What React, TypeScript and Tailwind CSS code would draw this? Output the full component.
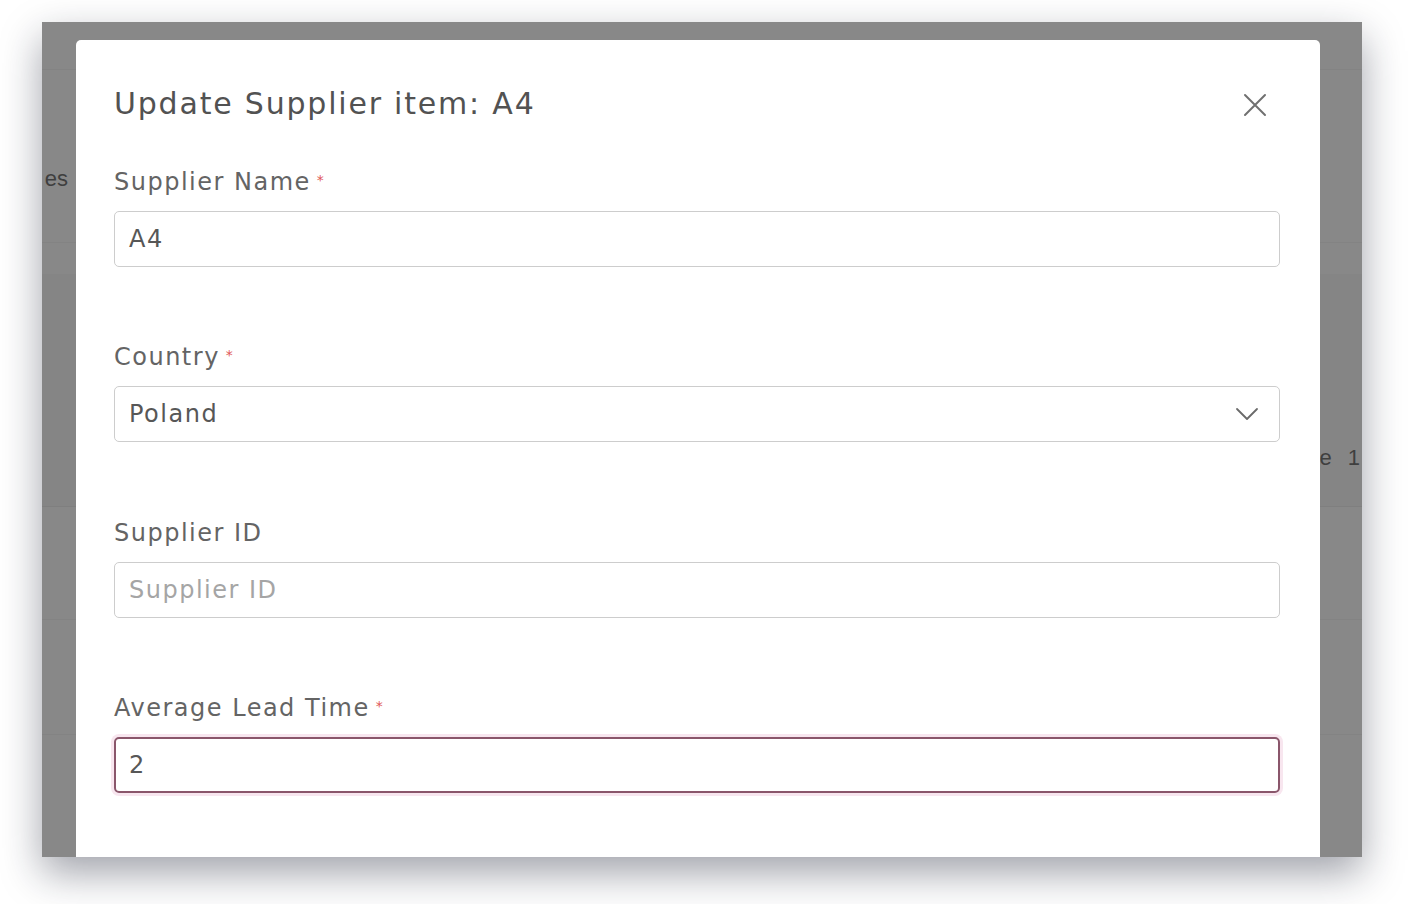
import React from "react";

const font = { fontFamily: '"DejaVu Sans", "Noto Sans", sans-serif' };

function Asterisk() {
  return <span className="ml-[6px] text-[14px] leading-none text-[#e05656] self-start mt-[6px]">*</span>;
}

function Field({
  label,
  required,
  children,
}: {
  label: string;
  required?: boolean;
  children: React.ReactNode;
}) {
  return (
    <div className="flex flex-col">
      <div className="flex h-[30px] items-center text-[24px] leading-[30px] tracking-[1.5px] text-[#646464]">
        <span>{label}</span>
        {required && <Asterisk />}
      </div>
      <div className="mt-[14px]">{children}</div>
    </div>
  );
}

export default function App() {
  return (
    <div className="w-[1418px] h-[904px] bg-white pl-[42px] pt-[22px] overflow-hidden" style={font}>
      <div className="relative w-[1320px] h-[835px] bg-[#888888] overflow-hidden shadow-[0_16px_38px_rgba(20,25,45,0.4)]">
        {/* background page content, dimmed under overlay */}
        <div className="flex flex-col text-[22px] text-[#3f3f3f]" style={{ fontFamily: '"Liberation Sans", Arial, sans-serif' }}>
          <div className="h-[48px] border-b border-[#838383]" />
          <div className="h-[173px] flex items-start pt-[95px] border-b border-[#838383]">
            <span className="w-[26px] text-right overflow-hidden whitespace-nowrap leading-[28px]">es</span>
          </div>
          <div className="h-[32px] border-b border-[#858585]" />
          <div className="h-[232px] bg-[#858585] border-b border-[#7f7f7f] flex justify-end items-end pb-[34px]">
            <span className="leading-[28px] mr-[16px]">e</span>
            <span className="leading-[28px] mr-[2px]">1</span>
          </div>
          <div className="h-[113px] border-b border-[#838383]" />
          <div className="h-[115px] border-b border-[#838383]" />
        </div>

        {/* modal */}
        <div className="absolute left-[34px] top-[18px] w-[1244px] bottom-0 bg-white rounded-t-[5px] pl-[38px] pr-[40px] pt-[46px]">
          <div className="flex items-center justify-between h-[36px]">
            <h2 className="text-[30px] leading-[36px] tracking-[1.8px] text-[#525252] font-normal">
              Update Supplier item: A4
            </h2>
            <svg width="24" height="24" viewBox="0 0 24 24" className="mr-[13px] mt-[2px]">
              <path d="M2 2 L22 22 M22 2 L2 22" stroke="#707070" strokeWidth="2" strokeLinecap="round" />
            </svg>
          </div>

          <div className="mt-[45px] flex flex-col">
            <Field label="Supplier Name" required>
              <div className="h-[56px] rounded-[5px] border-[1.5px] border-[#cdcdcd] flex items-center px-[14px] text-[24px] tracking-[1.5px] text-[#575757]">
                A4
              </div>
            </Field>
            <div className="mt-[75px]">
              <Field label="Country" required>
                <div className="h-[56px] rounded-[5px] border-[1.5px] border-[#cdcdcd] flex items-center justify-between pl-[14px] pr-[20px] text-[24px] tracking-[1.5px] text-[#575757]">
                  <span>Poland</span>
                  <svg width="24" height="14" viewBox="0 0 24 14">
                    <path d="M2 2 L12 12 L22 2" fill="none" stroke="#6a6a6a" strokeWidth="1.8" strokeLinecap="round" strokeLinejoin="round" />
                  </svg>
                </div>
              </Field>
            </div>
            <div className="mt-[76px]">
              <Field label="Supplier ID">
                <div className="h-[56px] rounded-[5px] border-[1.5px] border-[#cdcdcd] flex items-center px-[14px] text-[24px] tracking-[1.5px] text-[#a5a5a5]">
                  Supplier ID
                </div>
              </Field>
            </div>
            <div className="mt-[75px]">
              <Field label="Average Lead Time" required>
                <div className="h-[56px] rounded-[5px] border-2 border-[#8a566b] shadow-[0_0_0_3px_#f8e6ef] flex items-center px-[13px] text-[24px] tracking-[1.5px] text-[#575757]">
                  2
                </div>
              </Field>
            </div>
          </div>
        </div>
      </div>
    </div>
  );
}
